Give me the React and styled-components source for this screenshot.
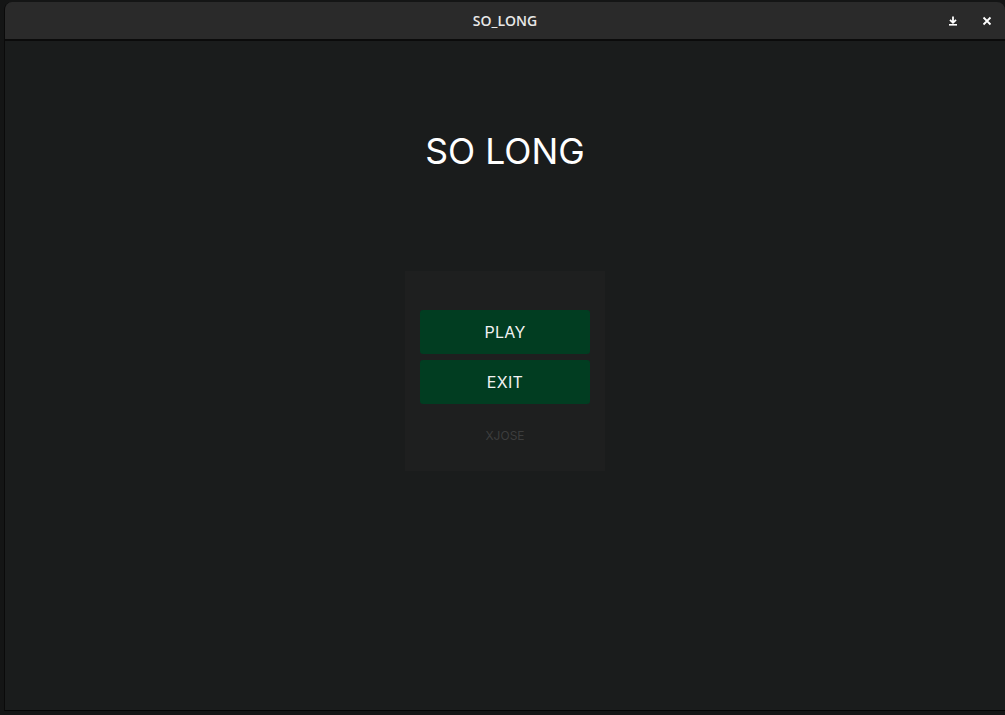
import React from 'react';
import styled, { createGlobalStyle } from 'styled-components';

const GlobalStyle = createGlobalStyle`
  html, body {
    margin: 0;
    padding: 0;
    background: #131414;
    overflow: hidden;
  }
  #root {
    width: 1005px;
    height: 715px;
  }
`;

const App = () => {
  return (
    <>
      <GlobalStyle />
      <Desktop>
        <Window>
          <TitleBar>
            <TitleSpacer />
            <Title>SO_LONG</Title>
            <TitleButtons>
              <TitleButton aria-label="minimize">
                <svg width="10" height="10" viewBox="0 0 10 10">
                  <path d="M5 0.5 V6.5 M2 3.8 L5 6.8 L8 3.8" stroke="#fff" strokeWidth="1.8" fill="none" />
                  <rect x="1" y="8" width="8" height="1.6" fill="#fff" />
                </svg>
              </TitleButton>
              <TitleButton aria-label="close">
                <svg width="10" height="10" viewBox="0 0 10 10">
                  <path d="M1.5 1.5 L8.5 8.5 M8.5 1.5 L1.5 8.5" stroke="#fff" strokeWidth="1.8" />
                </svg>
              </TitleButton>
            </TitleButtons>
          </TitleBar>
          <Content>
            <Heading>SO LONG</Heading>
            <Menu>
              <MenuButton>PLAY</MenuButton>
              <MenuButton>EXIT</MenuButton>
              <Credit>XJOSE</Credit>
            </Menu>
          </Content>
        </Window>
      </Desktop>
    </>
  );
};

export default App;

const Desktop = styled.div`
  width: 1005px;
  height: 715px;
  padding: 2px 0 4px 4px;
  box-sizing: border-box;
  background: #141515;
  display: flex;
`;

const Window = styled.div`
  flex: 1;
  display: flex;
  flex-direction: column;
  border-radius: 8px 8px 0 0;
  overflow: hidden;
  border-bottom: 1px solid #050505;
  border-left: 1px solid #0a0a0a;
`;

const TitleBar = styled.div`
  height: 37px;
  background: #2a2a2a;
  border-bottom: 2px solid #0b0b0b;
  display: flex;
  align-items: center;
  font-family: 'Open Sans', 'Noto Sans', sans-serif;
`;

const TitleSpacer = styled.div`
  width: 70px;
`;

const Title = styled.div`
  flex: 1;
  text-align: center;
  color: #e8e8e8;
  font-size: 14px;
  font-weight: 600;
`;

const TitleButtons = styled.div`
  width: 70px;
  display: flex;
  justify-content: flex-end;
  gap: 14px;
  padding-right: 8px;
  box-sizing: border-box;
`;

const TitleButton = styled.div`
  width: 20px;
  height: 20px;
  display: flex;
  align-items: center;
  justify-content: center;
`;

const Content = styled.div`
  flex: 1;
  background: #1a1c1c;
  display: flex;
  flex-direction: column;
  align-items: center;
  padding-top: 89px;
`;

const Heading = styled.h1`
  margin: 0;
  font-family: 'Inter', 'Liberation Sans', sans-serif;
  font-weight: 400;
  font-size: 35.5px;
  line-height: 44px;
  color: #ffffff;
`;

const Menu = styled.div`
  margin-top: 97px;
  width: 200px;
  height: 200px;
  box-sizing: border-box;
  background: #1e1f1f;
  padding: 39px 15px 0;
  display: flex;
  flex-direction: column;
  gap: 6px;
`;

const MenuButton = styled.button`
  height: 44px;
  border: none;
  border-radius: 3px;
  background: #013d21;
  color: #f2f2f2;
  font-family: 'Inter', 'Liberation Sans', sans-serif;
  font-size: 16px;
  letter-spacing: 0.3px;
  cursor: pointer;
`;

const Credit = styled.div`
  margin-top: 18px;
  text-align: center;
  font-family: 'Inter', 'Liberation Sans', sans-serif;
  font-size: 12px;
  color: #3c3d3d;
`;
